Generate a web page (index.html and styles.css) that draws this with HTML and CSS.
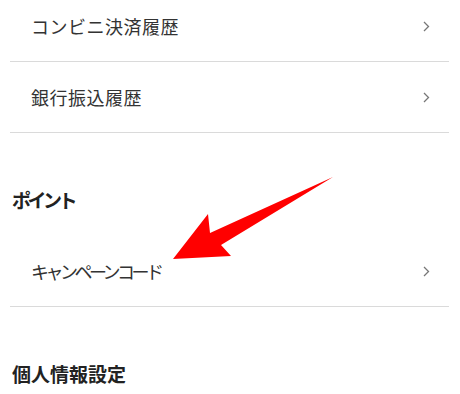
FILE: index.html
```html
<!DOCTYPE html>
<html>
<head lang="ja">
    <meta charset="UTF-8">
    <title>menu</title>
<link rel="stylesheet" href="styles.css">
</head>
<body>
<div class="menu">
    <div class="row">
        <span class="label">コンビニ決済履歴</span>
        <span class="chev"><svg width="7" height="11" viewBox="0 0 7 11"><path d="M1 1l4.5 4.5L1 10" fill="none" stroke="#777" stroke-width="1.3"/></svg></span>
    </div>
    <div class="row">
        <span class="label">銀行振込履歴</span>
        <span class="chev"><svg width="7" height="11" viewBox="0 0 7 11"><path d="M1 1l4.5 4.5L1 10" fill="none" stroke="#777" stroke-width="1.3"/></svg></span>
    </div>

    <h2 class="title kana">ポイント</h2>
    <div class="row">
        <span class="label kana">キャンペーンコード</span>
        <span class="chev"><svg width="7" height="11" viewBox="0 0 7 11"><path d="M1 1l4.5 4.5L1 10" fill="none" stroke="#777" stroke-width="1.3"/></svg></span>
    </div>

    <h2 class="title">個人情報設定</h2>
</div>
<!-- 注目の矢印 -->
<svg class="arrow" width="460" height="394" viewBox="0 0 460 394">
    <polygon points="333,177 221,245 231,256 173,259 208,214 210,233" fill="#ff0000"/>
</svg>
</body>
</html>
```

FILE: styles.css
```css
body {
	margin: 0;
	background-color: #fff;
	font-family: "Noto Sans CJK JP", "Noto Sans", sans-serif;
	color: #333;
	overflow: hidden;
}
.menu {
	margin-top: -9px;
	padding: 0 11px 0 10px;
}
.row {
	height: 70px;
	display: flex;
	justify-content: space-between;
	align-items: center;
	padding: 0 19px 0 21px;
	border-bottom: 1px solid #dadada;
}
.label {
	font-size: 18px;
	letter-spacing: 0.5px;
}
.chev {
	display: flex;
	align-items: center;
}
.title {
	margin: 50px 0 19px 2px;
	line-height: 34px;
	font-size: 19px;
	font-weight: bold;
	color: #222;
}
.kana {
	letter-spacing: -3.5px;
}
.arrow {
	position: absolute;
	top: 0;
	left: 0;
	pointer-events: none;
}
```
